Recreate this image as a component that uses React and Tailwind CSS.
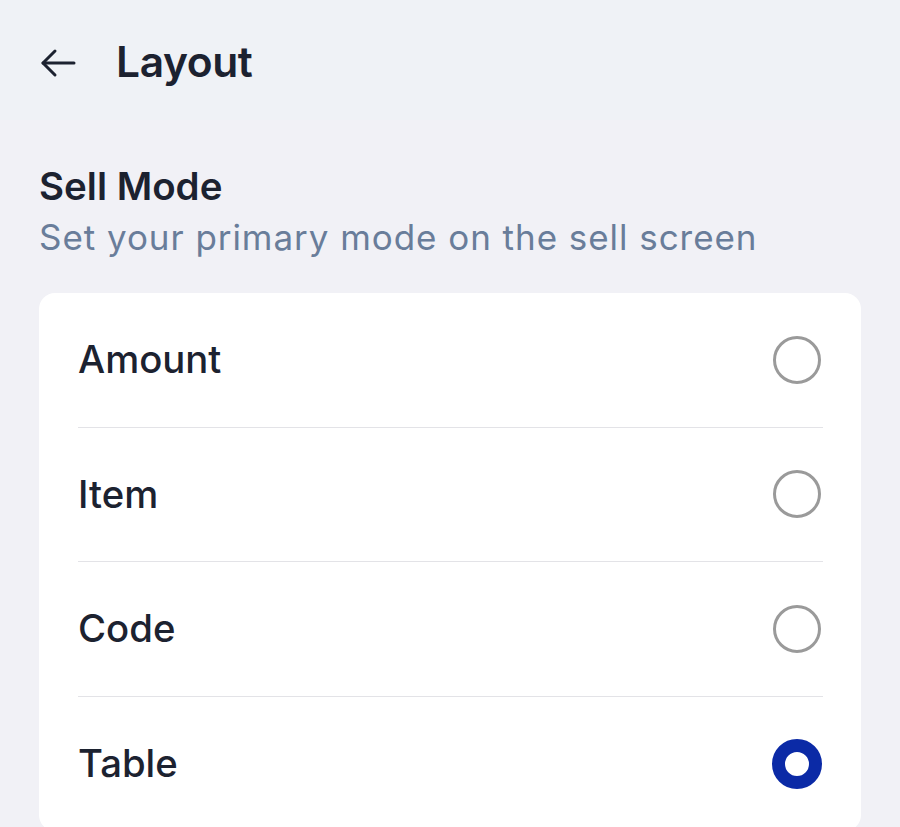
import { useState } from 'react';

const modes = ['Amount', 'Item', 'Code', 'Table'];

function BackArrow() {
    return (
        <svg width="36" height="30" viewBox="0 0 36 30" fill="none" stroke="#1c2230" strokeWidth="3" strokeLinecap="round" strokeLinejoin="round">
            <path d="M34 15H3" />
            <path d="M15 3L3 15l12 12" />
        </svg>
    );
}

function Radio({ checked }) {
    return (
        <div className="w-[50px] h-[50px] flex items-center justify-center">
            {checked ? (
                <div className="w-[50px] h-[50px] rounded-full border-[13px] border-[#0b2aa6] bg-white" />
            ) : (
                <div className="w-[48px] h-[48px] rounded-full border-[3px] border-[#9a9a9a] bg-white" />
            )}
        </div>
    );
}

function App() {
    const [mode, setMode] = useState('Table');

    return (
        <div className="min-h-screen bg-[#f1f1f6] font-['Inter',sans-serif]">
            <div className="h-[120px] bg-[#eff2f6] flex items-center pl-[40px] pt-[6px] gap-[40px]">
                <BackArrow />
                <div className="text-[42.5px] font-semibold text-[#1c2230] tracking-[-0.4px] pb-[2px]">Layout</div>
            </div>

            <div className="px-[39px] pt-[40px]">
                <div className="text-[38.5px] font-semibold text-[#1c2230] leading-[52px]">Sell Mode</div>
                <div className="text-[35px] text-[#697d9a] tracking-[0.95px] leading-[50px]">
                    Set your primary mode on the sell screen
                </div>

                <div className="mt-[31px] bg-white rounded-[16px] pl-[39px] pr-[38px]">
                    {modes.map((m, i) => (
                        <div
                            key={m}
                            onClick={() => setMode(m)}
                            className={`h-[134.5px] flex items-center justify-between pr-[1px] ${i < modes.length - 1 ? 'border-b border-[#e3e3e7]' : ''}`}
                        >
                            <span className="text-[38.3px] font-medium text-[#1c2230]">{m}</span>
                            <Radio checked={mode === m} />
                        </div>
                    ))}
                </div>
            </div>
        </div>
    );
}

export default App;
